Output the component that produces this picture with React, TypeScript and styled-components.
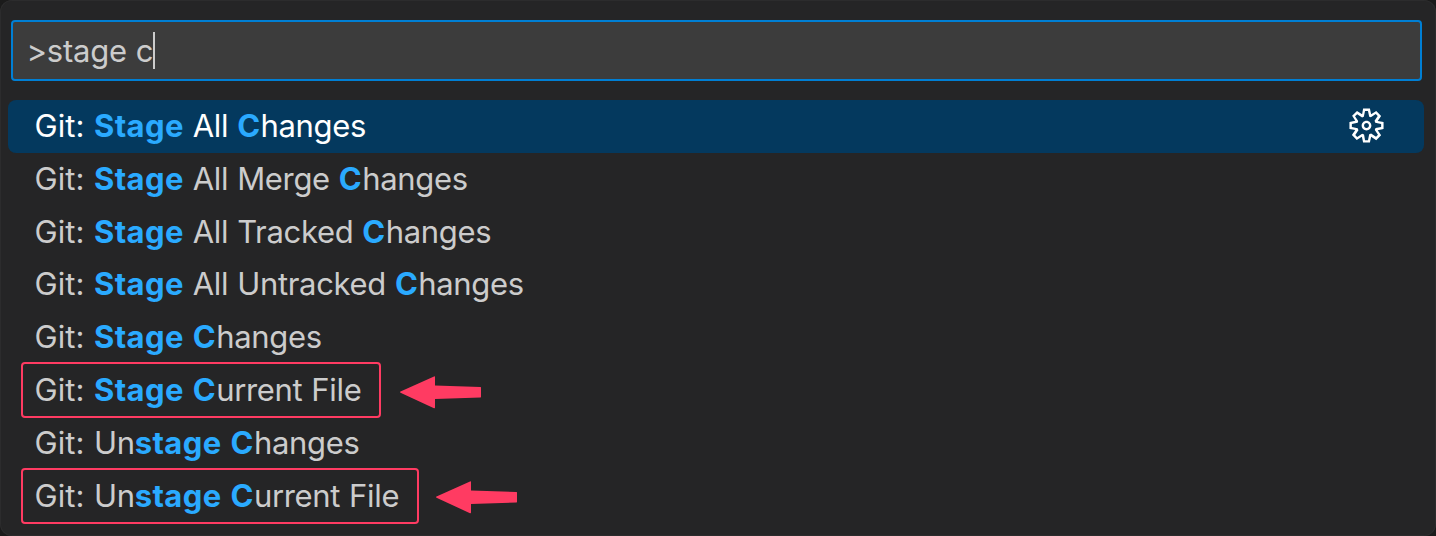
import React from "react";
import styled, { createGlobalStyle } from "styled-components";

const GlobalStyle = createGlobalStyle`
  *, *::before, *::after { box-sizing: border-box; }
  body { margin: 0; background: #1b1b1b; }
`;

const Palette = styled.main`
  width: 1436px;
  height: 536px;
  display: flex;
  flex-direction: column;
  overflow: hidden;
  padding: 20px 12px 0 8px;
  background: #252526;
  border-radius: 12px;
  box-shadow: inset 0 0 0 1px #2c2c2d;
  font-family: Inter, "Liberation Sans", sans-serif;
  font-size: 31px;
  font-weight: 440;
  color: #cccccc;
`;

const SearchBox = styled.div`
  display: flex;
  align-items: center;
  height: 61px;
  margin: 0 2px 19px 3px;
  padding: 0 14px 1px 13.5px;
  background: #3c3c3c;
  border: 2px solid #007fd4;
  border-radius: 4px;
`;

const Query = styled.span`
  white-space: pre;
  letter-spacing: -0.2px;
  word-spacing: 0.2px;
`;

const Caret = styled.span`
  width: 2px;
  height: 37px;
  background: #cccccc;
`;

const Results = styled.ul`
  display: flex;
  flex-direction: column;
  margin: 0;
  padding: 0;
  list-style: none;
`;

const Row = styled.li<{ $selected?: boolean }>`
  position: relative;
  display: flex;
  align-items: center;
  justify-content: space-between;
  flex: none;
  height: 52.85px;
  padding: 0 38px 1.15px 26.5px;
  border-radius: 8px;
  line-height: 52px;
  white-space: pre;
  color: ${(p) => (p.$selected ? "#ffffff" : "#cccccc")};
  background: ${(p) => (p.$selected ? "#04395e" : "transparent")};
`;

const Label = styled.span`
  letter-spacing: -0.33px;
  word-spacing: 0.6px;
`;

const Category = styled.span`
  letter-spacing: 0.08px;
`;

const Match = styled.b`
  font-weight: 700;
  letter-spacing: 0.4px;
  color: #2aaaff;
`;

const Frame = styled.span<{ $width: number }>`
  position: absolute;
  left: 13px;
  top: -2px;
  width: ${(p) => p.$width}px;
  height: 56px;
  border: 2px solid #ff3b62;
  border-radius: 4px;
`;

const Arrow = styled.svg<{ $left: number; $top: number }>`
  position: absolute;
  left: ${(p) => p.$left}px;
  top: ${(p) => p.$top}px;
  fill: #ff3b62;
`;

const Gear = styled.svg`
  width: 39px;
  height: 39px;
  margin-bottom: 0.5px;
  fill: #ffffff;
`;

type Command = {
  parts: string[];
  selected?: boolean;
  mark?: { width: number; arrow: number; top: number };
};

/* Odd entries of `parts` are the characters matched by the query. */
const commands: Command[] = [
  { parts: ["", "Stage", " All ", "C", "hanges"], selected: true },
  { parts: ["", "Stage", " All Merge ", "C", "hanges"] },
  { parts: ["", "Stage", " All Tracked ", "C", "hanges"] },
  { parts: ["", "Stage", " All Untracked ", "C", "hanges"] },
  { parts: ["", "Stage", " ", "C", "hanges"] },
  { parts: ["", "Stage", " ", "C", "urrent File"], mark: { width: 360, arrow: 392, top: 12 } },
  { parts: ["Un", "stage", " ", "C", "hanges"] },
  { parts: ["Un", "stage", " ", "C", "urrent File"], mark: { width: 398, arrow: 428, top: 11 } },
];

const GearIcon = () => (
  <Gear viewBox="0 0 16 16" aria-label="Configure Keybinding">
    <path
      fillRule="evenodd"
      d="M9.1 4.4L8.6 2H7.4l-.5 2.4-.7.3-2-1.3-.9.8 1.3 2-.2.7-2.4.5v1.2l2.4.5.3.8-1.3 2 .8.8 2-1.3.8.3.4 2.3h1.2l.5-2.4.8-.3 2 1.3.8-.8-1.3-2 .3-.8 2.3-.4V7.4l-2.4-.5-.3-.8 1.3-2-.8-.8-2 1.3-.7-.2zM9.4 1l.5 2.4L12 2.1l2 2-1.4 2.1 2.4.4v2.8l-2.4.5L14 12l-2 2-2.1-1.4-.5 2.4H6.6l-.5-2.4L4 13.9l-2-2 1.4-2.1L1 9.4V6.6l2.4-.5L2.1 4l2-2 2.1 1.4.4-2.4h2.8zm.6 7c0 1.1-.9 2-2 2s-2-.9-2-2 .9-2 2-2 2 .9 2 2zM8 9c.6 0 1-.4 1-1s-.4-1-1-1-1 .4-1 1 .4 1 1 1z"
    />
  </Gear>
);

export default function App() {
  return (
    <>
      <GlobalStyle />
      <Palette>
        <SearchBox>
          <Query>&gt;stage c</Query>
          <Caret />
        </SearchBox>
        <Results>
          {commands.map((c) => (
            <Row key={c.parts.join("")} $selected={c.selected}>
              <Label>
                <Category>{"Git: "}</Category>
                {c.parts.map((part, i) =>
                  i % 2 ? <Match key={i}>{part}</Match> : part
                )}
              </Label>
              {c.selected && <GearIcon />}
              {c.mark && (
                <>
                  <Frame $width={c.mark.width} />
                  <Arrow $left={c.mark.arrow} $top={c.mark.top} width="82" height="33" viewBox="0 0 82 33">
                    <path d="M0.5 15.4Q-0.5 16 0.5 16.8L34 32.2Q35 32.5 35 31.5V23L80.5 21.5Q81 21.4 81 21V11.5Q81 11 80.5 11L35 9.5V1Q35 0 34 0.5Z" />
                  </Arrow>
                </>
              )}
            </Row>
          ))}
        </Results>
      </Palette>
    </>
  );
}
